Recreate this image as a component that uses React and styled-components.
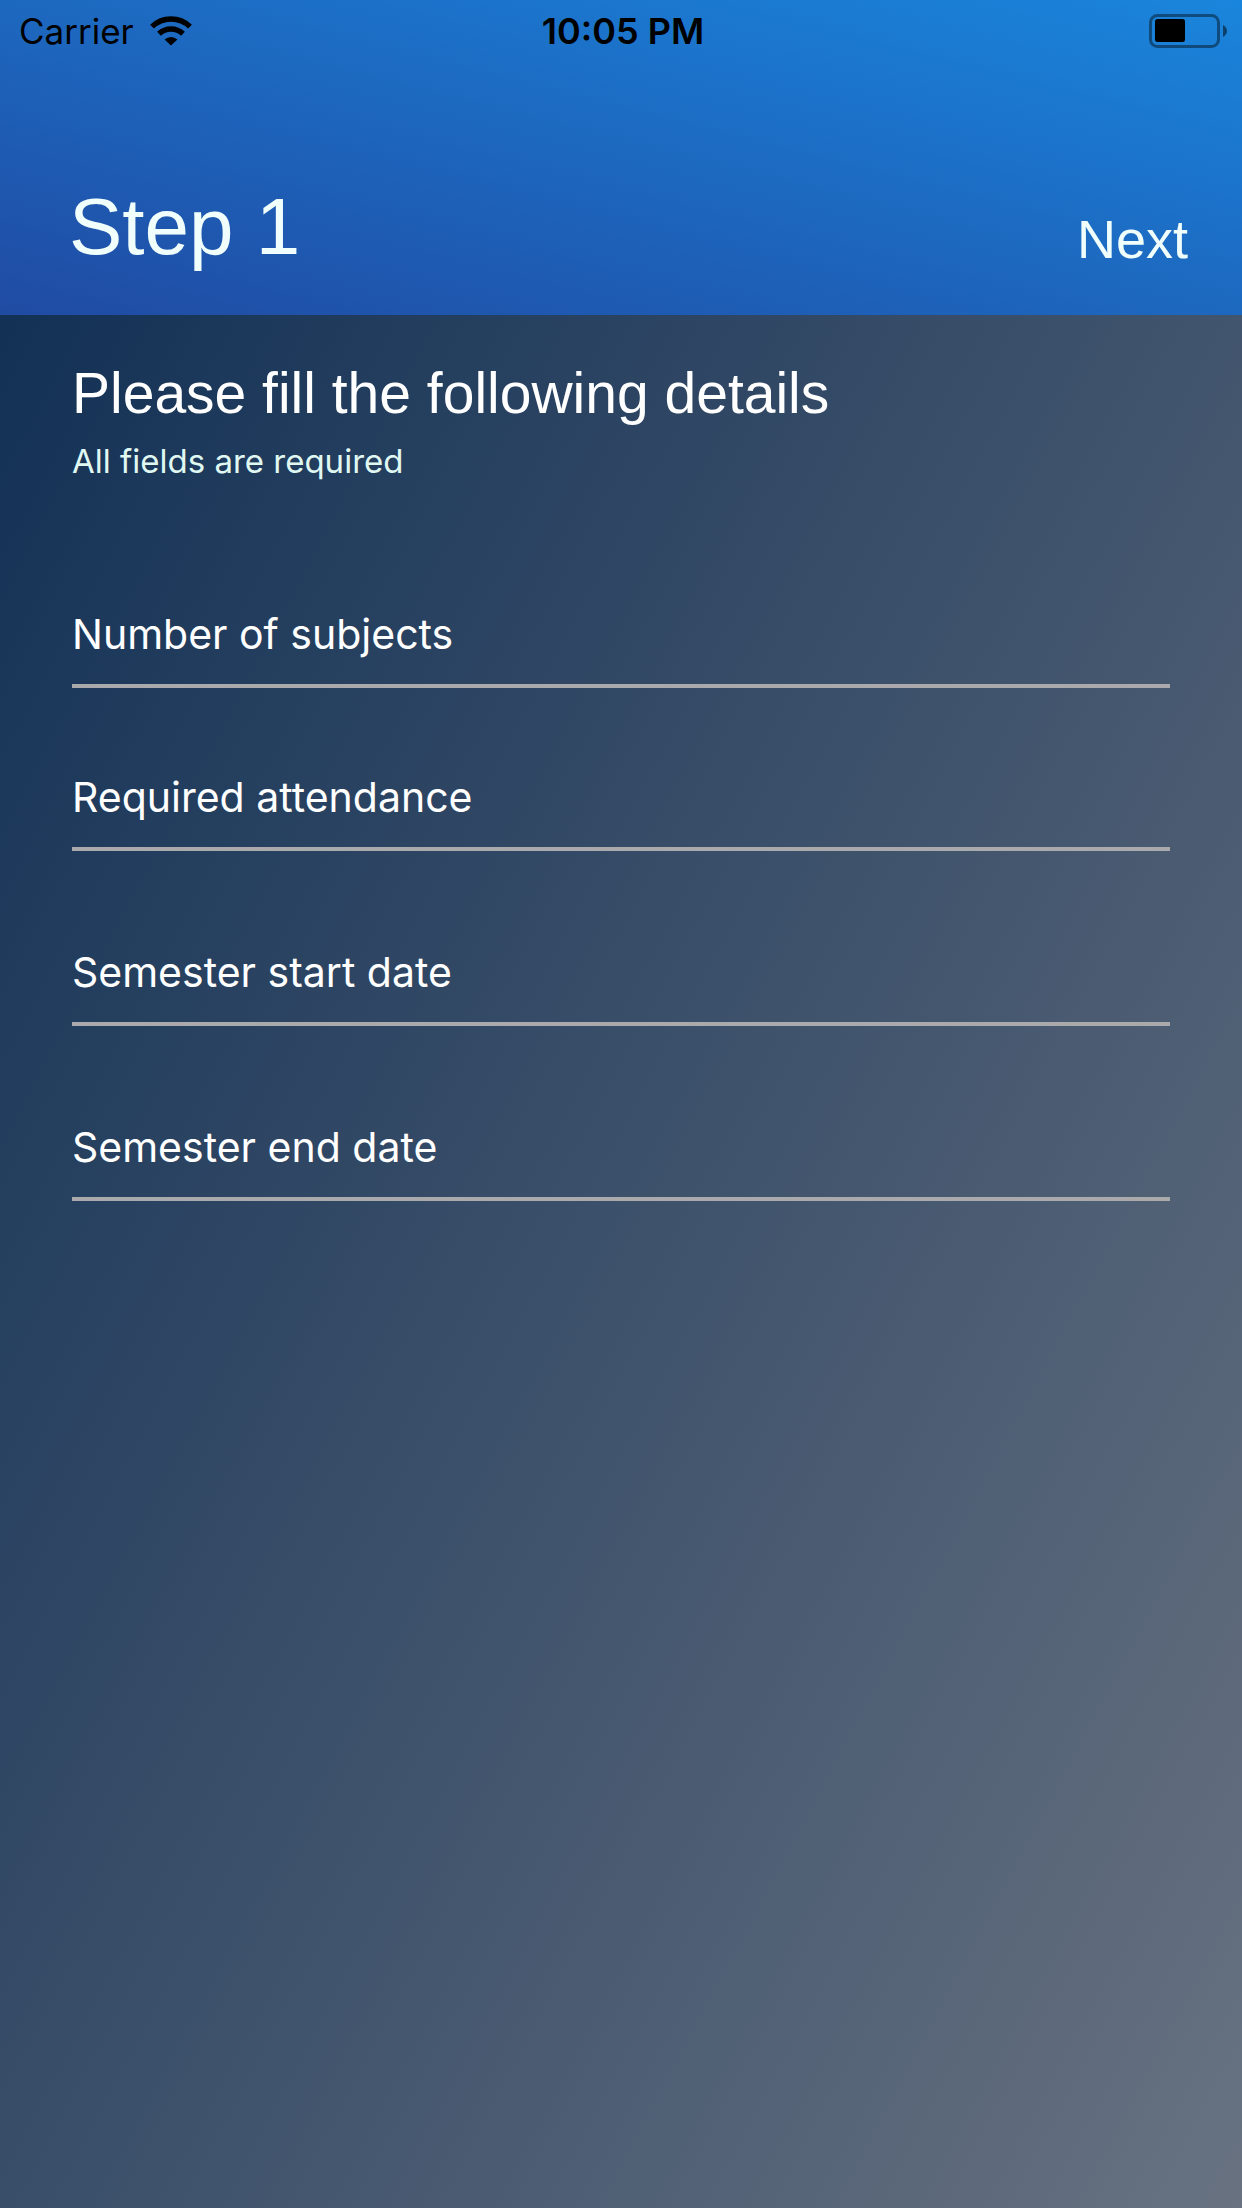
import React from 'react';
import styled, { createGlobalStyle } from 'styled-components';

const GlobalStyle = createGlobalStyle`
  *, *::before, *::after { box-sizing: border-box; }
  body { margin: 0; }
`;

const text = '"Inter", "Liberation Sans", sans-serif';
const display = '"Liberation Sans", Arial, sans-serif';

const Screen = styled.div`
  min-height: 100vh;
  display: flex;
  flex-direction: column;
  font-family: ${text};
  background: linear-gradient(118deg, #0c2c52, #687281);
`;

const Header = styled.header`
  display: flex;
  flex-direction: column;
  justify-content: space-between;
  height: 315px;
  background: linear-gradient(to top right, #204ba3, #1a85dc);
`;

const StatusBar = styled.div`
  display: grid;
  grid-template-columns: 1fr auto 1fr;
  align-items: center;
  height: 62px;
  padding: 0 15px 0 19px;
  line-height: 44px;
  color: #000;
`;

const Carrier = styled.div`
  display: flex;
  align-items: center;
  gap: 16px;
  font-size: 35px;
`;

const Clock = styled.time`
  font-size: 36px;
  font-weight: 600;
`;

const Battery = styled.svg`
  justify-self: end;
  display: block;
`;

const NavBar = styled.div`
  display: flex;
  align-items: flex-end;
  justify-content: space-between;
  padding: 0 54px 42px 69px;
`;

const Title = styled.h1`
  margin: 0;
  font: 400 80px/92px ${display};
  color: #f0fffc;
`;

const NextButton = styled.button`
  padding: 0;
  border: 0;
  background: none;
  font: 400 54px/68px ${display};
  color: #f0fffc;
  cursor: pointer;
`;

const Form = styled.form`
  display: flex;
  flex-direction: column;
  padding: 46px 72px;
`;

const Heading = styled.h2`
  margin: 0;
  font: 400 57px/64px ${display};
  color: #fff;
`;

const Hint = styled.p`
  margin: 16px 0 0;
  font-size: 33px;
  line-height: 40px;
  color: #e0f8f2;
`;

const Fields = styled.div`
  display: flex;
  flex-direction: column;
  gap: ${(p) => p.$gap}px;
`;

const FormFields = styled(Fields)`
  margin-top: 104px;
`;

const Input = styled.input`
  width: 100%;
  height: 103px;
  padding: 0 0 2px;
  border: 0;
  border-bottom: 4px solid #aaa9ab;
  border-radius: 0;
  outline: 0;
  background: transparent;
  font: 400 41px/52px ${text};
  color: #fff;

  &::placeholder {
    color: #fff;
    opacity: 1;
  }
`;

const Field = ({ name, label }) => (
  <Input name={name} placeholder={label} aria-label={label} required />
);

export default function App() {
  return (
    <>
      <GlobalStyle />
      <Screen>
        <Header>
          <StatusBar>
            <Carrier>
              <span>Carrier</span>
              <svg width="42" height="30" viewBox="0 0 42 30" aria-hidden="true">
                <g fill="none" stroke="#000" strokeWidth="5.4">
                  <path d="M2 10.6 A27.4 27.4 0 0 1 40 10.6" />
                  <path d="M9 17.8 A17.4 17.4 0 0 1 33 17.8" />
                </g>
                <path d="M21 29.6 L14.6 23.4 A9.4 9.4 0 0 1 27.4 23.4 Z" />
              </svg>
            </Carrier>
            <Clock>10:05 PM</Clock>
            <Battery width="78" height="34" viewBox="0 0 78 34" aria-hidden="true">
              <rect x="1.5" y="1.5" width="68" height="31" rx="7" fill="none" stroke="#000" strokeOpacity="0.42" strokeWidth="3" />
              <rect x="6" y="5" width="30" height="23" rx="2.5" />
              <path d="M74 11 Q78 13.500 78 17 Q78 20.500 74 23 Z" fillOpacity="0.5" />
            </Battery>
          </StatusBar>
          <NavBar>
            <Title>Step 1</Title>
            <NextButton type="button">Next</NextButton>
          </NavBar>
        </Header>
        <Form>
          <Heading>Please fill the following details</Heading>
          <Hint>All fields are required</Hint>
          <FormFields $gap={72}>
            <Fields $gap={60}>
              <Field name="subjects" label="Number of subjects" />
              <Field name="attendance" label="Required attendance" />
            </Fields>
            <Field name="start" label="Semester start date" />
            <Field name="end" label="Semester end date" />
          </FormFields>
        </Form>
      </Screen>
    </>
  );
}
